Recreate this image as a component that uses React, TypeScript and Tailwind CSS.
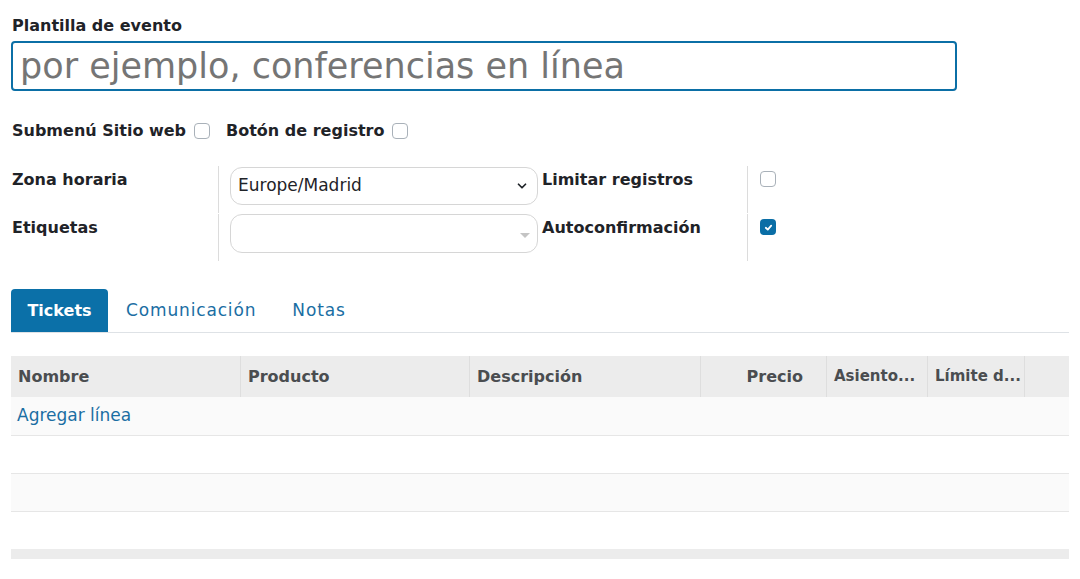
import { ChevronDown } from "lucide-react";

const font = { fontFamily: '"DejaVu Sans", "Noto Sans", sans-serif' };

function Box({ checked = false }: { checked?: boolean }) {
  if (checked) {
    return (
      <span className="flex h-[16px] w-[16px] items-center justify-center rounded-[4px] bg-[#0a6ea6]">
        <svg viewBox="0 0 10 10" className="h-[9px] w-[9px]" fill="none" stroke="white" strokeWidth="2" strokeLinecap="round" strokeLinejoin="round">
          <path d="M2 5.3 L4.2 7.3 L8 3" />
        </svg>
      </span>
    );
  }
  return <span className="block h-[16px] w-[16px] rounded-[4px] border border-[#a9b1b9] bg-white" />;
}

const columns = [
  { label: "Nombre", w: "w-[230px]", align: "text-left pr-[7px] text-[16px]" },
  { label: "Producto", w: "w-[229px]", align: "text-left pr-[7px] text-[16px]" },
  { label: "Descripción", w: "w-[231px]", align: "text-left pr-[7px] text-[16px]" },
  { label: "Precio", w: "w-[126px]", align: "text-right pr-[23px] text-[16px]" },
  { label: "Asiento...", w: "w-[101px]", align: "text-left pr-[2px] text-[15px]" },
  { label: "Límite d...", w: "w-[97px]", align: "text-left pr-[2px] text-[15px]" },
];

export default function App() {
  return (
    <div className="min-h-[579px] w-[1080px] bg-white text-[#1f2328]" style={font}>
      <div className="px-[11px] pt-[15px]">
        <label className="block pl-[1px] text-[16px] font-semibold leading-[22px]">Plantilla de evento</label>
        <div className="mt-[4px] flex h-[50px] w-[946px] items-center rounded-[4px] border-2 border-[#0b6fa6] px-[7px]">
          <span className="text-[35px] leading-none text-[#757575]">por ejemplo, conferencias en línea</span>
        </div>

        <div className="mt-[28px] flex items-center pl-[1px] text-[16px] font-semibold">
          <span>Submenú Sitio web</span>
          <span className="ml-[8px]"><Box /></span>
          <span className="ml-[16px]">Botón de registro</span>
          <span className="ml-[8px]"><Box /></span>
        </div>

        <div className="mt-[23px] flex flex-col gap-[1px]">
          <div className="flex h-[47px]">
            <div className="w-[207px] pl-[1px] pt-[2px] text-[16px] font-semibold">Zona horaria</div>
            <div className="border-l border-[#dcdcdc] pl-[11px] pt-[1px]">
              <div className="flex h-[38px] w-[308px] items-center justify-between rounded-[12px] border border-[#d6d6d6] pl-[7px] pr-[8px] text-[17px]">
                <span>Europe/Madrid</span>
                <ChevronDown className="h-[14px] w-[14px]" strokeWidth={3} />
              </div>
            </div>
            <div className="w-[209px] pl-[4px] pt-[2px] text-[16px] font-semibold">Limitar registros</div>
            <div className="border-l border-[#dcdcdc] pl-[12px] pt-[5px]"><Box /></div>
          </div>
          <div className="flex h-[47px]">
            <div className="w-[207px] pl-[1px] pt-[2px] text-[16px] font-semibold">Etiquetas</div>
            <div className="border-l border-[#dcdcdc] pl-[11px]">
              <div className="flex h-[39px] w-[308px] items-center justify-end rounded-[12px] border border-[#d6d6d6] pr-[7px]">
                <span className="mt-[4px] h-0 w-0 border-x-[5px] border-t-[5px] border-x-transparent border-t-[#c4c4c4]" />
              </div>
            </div>
            <div className="w-[209px] pl-[4px] pt-[2px] text-[16px] font-semibold">Autoconfirmación</div>
            <div className="border-l border-[#dcdcdc] pl-[12px] pt-[5px]"><Box checked /></div>
          </div>
        </div>

        <div className="mt-[27px] flex h-[45px] w-[1058px] items-end border-b border-[#dee2e6]">
          <div className="flex h-[43px] w-[97px] items-center justify-center rounded-t-[4px] bg-[#0b70a8] text-[16px] font-bold text-white">Tickets</div>
          <div className="flex h-[43px] items-center px-[18px] text-[17px] tracking-[0.05em] text-[#1a6ea3]">Comunicación</div>
          <div className="flex h-[43px] items-center px-[18px] text-[17px] tracking-[0.05em] text-[#1a6ea3]">Notas</div>
        </div>

        <div className="mt-[23px] w-[1058px]">
          <div className="flex h-[41px] bg-[#ececec] font-semibold text-[#4a4d50]">
            {columns.map((c) => (
              <div key={c.label} className={`${c.w} ${c.align} flex items-center overflow-hidden whitespace-nowrap border-r border-[#dedede] pl-[7px]`}>
                <span className="w-full">{c.label}</span>
              </div>
            ))}
            <div className="flex-1" />
          </div>
          <div className="flex h-[39px] items-center border-b border-[#e6e6e6] bg-[#fafafa] px-[6px] text-[17px] text-[#1a6ea3]">Agregar línea</div>
          <div className="h-[38px] border-b border-[#e6e6e6] bg-white" />
          <div className="h-[38px] border-b border-[#e6e6e6] bg-[#fafafa]" />
          <div className="h-[37px] bg-white" />
          <div className="h-[10px] bg-[#ececec]" />
        </div>
      </div>
    </div>
  );
}
